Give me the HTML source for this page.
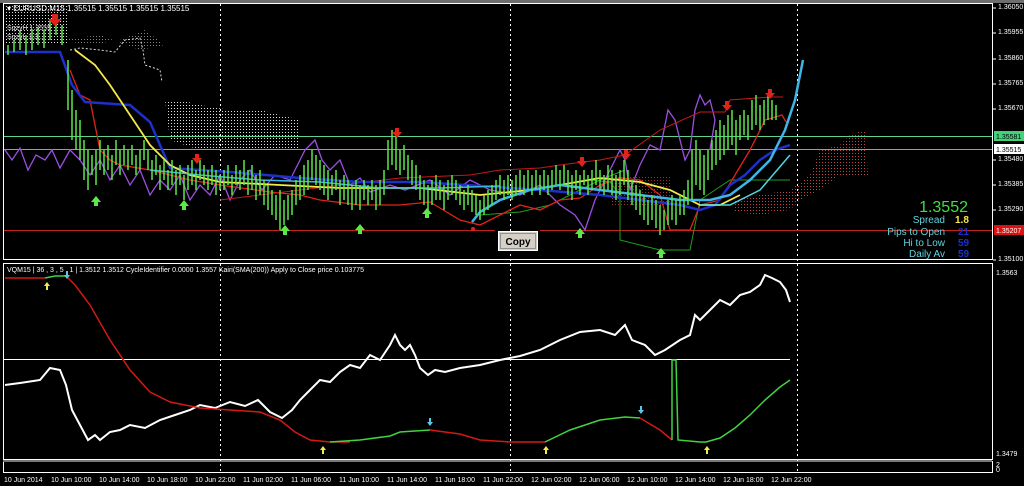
<!DOCTYPE html>
<html><head><meta charset="utf-8"><style>
html,body{margin:0;padding:0;background:#000;width:1024px;height:486px;overflow:hidden}
svg{display:block}
text{font-family:"Liberation Sans",sans-serif}
</style></head><body>
<svg width="1024" height="486" viewBox="0 0 1024 486" xmlns="http://www.w3.org/2000/svg">
<defs>
<pattern id="wd" width="3" height="3" patternUnits="userSpaceOnUse"><rect width="1" height="1" fill="#ddd"/></pattern>
<pattern id="rd" width="3" height="3" patternUnits="userSpaceOnUse"><rect width="1" height="1" fill="#b44"/></pattern>
</defs>
<rect x="0" y="0" width="1024" height="3" fill="#6e6e6e"/>
<!-- panes -->
<rect x="3.5" y="3.5" width="989" height="256" fill="none" stroke="#fff"/>
<rect x="3.5" y="263.5" width="989" height="196" fill="none" stroke="#fff"/>
<rect x="3.5" y="461.5" width="989" height="11" fill="none" stroke="#fff"/>
<rect x="3" y="460" width="989" height="2" fill="#777"/>
<!-- dotted verticals -->
<g stroke="#fff" stroke-dasharray="2,3">
<line x1="220.5" y1="4" x2="220.5" y2="474"/><line x1="510.5" y1="4" x2="510.5" y2="474"/><line x1="797.5" y1="4" x2="797.5" y2="474"/>
</g>
<!-- clouds -->
<rect x="5" y="5" width="62" height="40" fill="url(#wd)"/>
<polygon points="165,100 180,100 200,105 230,110 260,110 300,120 300,150 240,150 200,150 170,140" fill="url(#wd)"/>
<polygon points="60,40 100,35 140,50 165,45 145,30 120,40 90,45" fill="url(#wd)" opacity=".6"/>
<path d="M70,50 L80,48 100,50 115,52 125,40 140,38 143,50 145,65 160,70 162,82" fill="none" stroke="#ddd" stroke-dasharray="2,2"/>
<polygon points="735,200 760,195 790,190 810,175 820,150 840,145 850,135 865,130 868,175 840,175 820,190 800,200 790,210 760,215 735,212" fill="url(#rd)"/>
<rect x="610" y="175" width="60" height="30" fill="url(#rd)" opacity=".8"/>
<!-- horizontal lines -->
<line x1="4" y1="136.5" x2="992" y2="136.5" stroke="#5fd38d"/>
<line x1="4" y1="149.5" x2="992" y2="149.5" stroke="#9a9a9a"/>
<line x1="4" y1="230.5" x2="495" y2="230.5" stroke="#c0221d"/>
<line x1="540" y1="230.5" x2="992" y2="230.5" stroke="#c0221d"/>
<line x1="4" y1="359.5" x2="790" y2="359.5" stroke="#fff"/>
<!-- green stepped line -->
<polyline points="590,180 610,182 620,195 620,240 660,250 690,250 700,200 715,190 730,180 790,180" fill="none" stroke="#1f9e1f" stroke-width="1"/>
<polyline points="480,215 520,212 550,205 600,180 625,170" fill="none" stroke="#1f9e1f"/>
<!-- purple -->
<polyline points="5,150 12,160 20,148 28,170 36,155 45,160 52,150 60,168 70,150 80,160 90,175 100,160 110,180 120,165 130,185 140,170 150,195 160,180 170,190 180,175 190,200 200,185 210,195 220,175 230,200 240,180 250,170 262,190 275,175 290,180 305,150 315,140 322,160 330,170 340,160 350,185 360,178 370,192 390,185 405,190 430,180 450,195 470,180 490,190 520,195 540,185 560,205 575,215 585,230 595,200 610,170 620,150 625,160 630,190 640,165 650,145 660,150 668,110 675,120 685,160 690,150 695,110 700,95 705,105 710,100 715,120 710,150" fill="none" stroke="#9b4fe0" stroke-width="1.3"/>
<!-- red lines -->
<polyline points="70,70 80,95 90,100 100,150 110,160 120,165 150,170 190,180 220,185 270,192 300,195 320,200 360,205 400,205 430,202 460,220 480,225 500,215 520,205 540,210 560,200 580,198 600,185 620,178 640,180 660,195 670,230 690,230 700,205 720,200 735,175 750,150 765,120 782,115 786,122" fill="none" stroke="#e0231a" stroke-width="1.3"/>
<polyline points="220,200 300,190 400,178 470,175 500,170 540,168 560,165 600,160 625,155 660,130 700,112 725,112 730,100 770,97 783,97" fill="none" stroke="#c21b17"/>
<!-- blue -->
<polyline points="5,52 60,52 72,85 85,102 130,105 150,122 170,168 230,172 300,178 360,182 420,182 480,186 540,190 600,195 640,200 680,205 700,210 715,205 730,185 745,175 760,160 775,150 790,145" fill="none" stroke="#1d30c8" stroke-width="2.5"/>
<!-- yellow -->
<polyline points="75,50 95,65 110,85 130,115 150,145 170,165 190,175 220,182 280,185 340,188 420,188 480,195 530,190 560,185 600,178 640,182 670,190 700,205 720,205 740,195" fill="none" stroke="#f3ea4a" stroke-width="1.8"/>
<!-- cyan -->
<polyline points="472,222 480,212 500,200 530,190 560,185 600,190 640,195 680,200 710,200 730,195 750,180 770,160 785,130 795,100 803,60" fill="none" stroke="#3fb6e6" stroke-width="2.5"/>
<polyline points="150,170 200,175 260,180 320,182 380,188 440,188 500,186" fill="none" stroke="#3fb6e6" stroke-width="1.5"/>
<polyline points="700,205 730,205 760,190 790,155" fill="none" stroke="#4fd6df" stroke-width="1.5"/>
<!-- green candles -->
<g stroke="#5de84a" stroke-width="1.5">
<path d="M8,45V55 M14,40V52 M20,30V50 M26,35V55 M32,30V50 M38,28V45 M44,30V48 M50,20V40 M56,15V35 M62,25V45 M68,60V110 M72,90V140 M76,110V150 M80,120V160 M84,140V180 M88,150V190 M92,155V175 M96,150V185 M100,140V170 M104,150V175 M108,145V170 M112,155V180 M116,140V165 M120,150V175 M124,145V165 M128,150V170 M132,145V165 M136,155V175 M140,150V170 M144,140V160 M148,150V170 M152,160V180 M156,155V175 M160,165V190 M164,160V180 M168,170V190 M172,160V185 M176,170V195 M180,165V185 M184,175V200 M188,165V190 M192,160V185 M196,170V190 M200,160V180 M204,165V185 M208,170V190 M212,165V185 M216,170V195 M220,175V190 M224,170V190 M228,165V185 M232,175V195 M236,165V185 M240,170V190 M244,160V185 M248,170V195 M252,165V190 M256,175V200 M260,170V195 M264,180V205 M268,185V210 M272,190V215 M276,195V220 M280,190V230 M284,200V225 M288,195V220 M292,190V215 M296,180V205 M300,175V200 M304,165V195 M308,160V190 M312,150V180 M316,155V185 M320,160V190 M324,165V195 M328,170V200 M332,175V195 M336,170V190 M340,180V205 M344,175V200 M348,180V205 M352,185V210 M356,180V205 M360,185V210 M364,180V200 M368,185V205 M372,180V200 M376,185V210 M380,180V205 M384,170V195 M388,140V170 M392,130V165 M396,135V170 M400,150V175 M404,145V170 M408,155V180 M412,160V185 M416,165V190 M420,175V200 M424,180V205 M428,185V210 M432,180V205 M436,175V200 M440,180V200 M444,185V210 M448,180V200 M452,175V195 M456,180V200 M460,185V205 M464,190V210 M468,185V205 M472,190V212 M476,195V215 M480,200V220 M484,195V215 M488,190V210 M492,185V205 M496,180V200 M500,175V195 M504,180V200 M508,175V195 M512,180V200 M516,175V195 M520,170V190 M524,175V195 M528,170V190 M532,175V195 M536,170V190 M540,175V195 M544,170V190 M548,175V195 M552,170V190 M556,165V185 M560,170V190 M564,165V185 M568,170V195 M572,175V200 M576,170V190 M580,175V195 M584,170V185 M588,175V195 M592,170V190 M596,160V185 M600,170V190 M604,175V195 M608,165V190 M612,170V195 M616,175V200 M620,170V195 M624,160V185 M628,170V200 M632,180V205 M636,185V210 M640,190V215 M644,195V220 M648,200V225 M652,195V220 M656,200V228 M660,205V235 M664,210V230 M668,200V225 M672,195V220 M676,200V225 M680,195V215 M684,190V215 M688,180V205 M692,150V200 M696,140V185 M700,150V190 M704,155V195 M708,150V180 M712,140V170 M716,130V165 M720,120V160 M724,125V155 M728,115V150 M732,110V145 M736,120V155 M740,115V140 M744,110V135 M748,115V140 M752,100V130 M756,95V125 M760,105V130 M764,100V125 M768,95V120 M772,100V120 M776,105V120"/>
</g>
<!-- arrows -->
<g fill="#e0231a"><path d="M52,14h6v5h4l-7,7l-7-7h4z"/><path d="M195,154h4v4h3l-5,6l-5-6h3z"/><path d="M395,128h4v4h3l-5,6l-5-6h3z"/><path d="M580,157h4v4h3l-5,6l-5-6h3z"/><path d="M624,150h4v4h3l-5,6l-5-6h3z"/><path d="M725,101h4v4h3l-5,6l-5-6h3z"/><path d="M768,89h4v4h3l-5,6l-5-6h3z"/><circle cx="473" cy="229" r="2"/></g>
<g fill="#5de84a"><path d="M94,206h4v-4h3l-5,-6l-5,6h3z"/><path d="M182,210h4v-4h3l-5,-6l-5,6h3z"/><path d="M283,235h4v-4h3l-5,-6l-5,6h3z"/><path d="M358,234h4v-4h3l-5,-6l-5,6h3z"/><path d="M425,218h4v-4h3l-5,-6l-5,6h3z"/><path d="M578,238h4v-4h3l-5,-6l-5,6h3z"/><path d="M659,258h4v-4h3l-5,-6l-5,6h3z"/></g>
<!-- header text -->
<text x="7" y="11" font-size="8" fill="#fff">▾ EURUSD,M15  1.35515 1.35515 1.35515 1.35515</text>
<text x="7" y="30" font-size="7" fill="#ddd">SqzyH 1.3555</text>
<text x="7" y="39" font-size="7" fill="#ddd">SqzyL 1.3...</text>
<!-- info block -->
<text x="968" y="212" font-size="16" fill="#3fe03f" text-anchor="end">1.3552</text>
<text x="945" y="223" font-size="10" fill="#5fd6e0" text-anchor="end">Spread</text><text x="955" y="223" font-size="10" fill="#f3ea4a" font-weight="bold">1.8</text>
<text x="945" y="235" font-size="10" fill="#5fd6e0" text-anchor="end">Pips to Open</text><text x="958" y="235" font-size="10" fill="#1d30c8" font-weight="bold">21</text>
<text x="945" y="246" font-size="10" fill="#5fd6e0" text-anchor="end">Hi to Low</text><text x="958" y="246" font-size="10" fill="#1d30c8" font-weight="bold">59</text>
<text x="945" y="257" font-size="10" fill="#5fd6e0" text-anchor="end">Daily Av</text><text x="958" y="257" font-size="10" fill="#1d30c8" font-weight="bold">59</text>
<!-- Copy button -->
<rect x="498.5" y="231.5" width="39" height="19" fill="#d4d0c8" stroke="#fff"/>
<rect x="500.5" y="233.5" width="35" height="15" fill="none" stroke="#555" stroke-dasharray="1,1"/>
<text x="518" y="245" font-size="10" font-weight="bold" fill="#000" text-anchor="middle">Copy</text>
<!-- right axis -->
<g font-size="7" fill="#fff">
<text x="998" y="9">1.36050</text><text x="998" y="34">1.35955</text><text x="998" y="60">1.35860</text><text x="998" y="85">1.35765</text><text x="998" y="110">1.35670</text><text x="998" y="161">1.35480</text><text x="998" y="186">1.35385</text><text x="998" y="211">1.35290</text><text x="998" y="261">1.35100</text>
<text x="996" y="275">1.3563</text><text x="996" y="456">1.3479</text><text x="996" y="467">2</text><text x="996" y="472">0</text>
</g>
<g stroke="#fff"><line x1="993" y1="8" x2="996" y2="8"/><line x1="993" y1="33" x2="996" y2="33"/><line x1="993" y1="59" x2="996" y2="59"/><line x1="993" y1="84" x2="996" y2="84"/><line x1="993" y1="109" x2="996" y2="109"/><line x1="993" y1="160" x2="996" y2="160"/><line x1="993" y1="185" x2="996" y2="185"/><line x1="993" y1="210" x2="996" y2="210"/><line x1="993" y1="260" x2="996" y2="260"/></g>
<rect x="994" y="131" width="30" height="10" fill="#3fd37a"/><text x="996" y="139" font-size="7" fill="#000">1.35581</text>
<rect x="994" y="144" width="30" height="10" fill="#fff"/><text x="996" y="152" font-size="7" fill="#000">1.35515</text>
<rect x="994" y="225" width="30" height="10" fill="#d11"/><text x="996" y="233" font-size="7" fill="#fff">1.35207</text>
<!-- sub-window -->
<text x="7" y="272" font-size="7" fill="#fff">VQM15 |  36 , 3 , 5 , 1  |  1.3512 1.3512  CycleIdentifier 0.0000 1.3557  Kairi(SMA(200)) Apply to Close price 0.103775</text>
<polyline points="5,385 20,383 40,380 50,368 60,370 66,385 72,410 80,425 88,440 95,435 100,440 110,432 120,430 130,425 145,428 160,420 175,415 190,410 200,405 215,408 230,402 245,406 258,400 270,412 282,418 292,410 300,400 310,390 320,380 330,382 340,372 350,365 360,368 370,355 380,360 390,345 395,335 400,345 405,350 410,345 415,355 420,368 428,375 435,370 445,372 460,368 480,365 500,360 520,356 540,350 560,340 580,332 600,330 615,335 625,325 632,340 645,345 655,355 665,350 680,340 690,335 695,315 700,320 710,310 720,300 730,305 740,295 750,292 760,285 765,275 772,278 780,282 786,290 790,302" fill="none" stroke="#fff" stroke-width="2"/>
<polyline points="5,278 45,278" fill="none" stroke="#d21a15" stroke-width="1.5"/>
<polyline points="45,278 55,276 66,276" fill="none" stroke="#3fd43f" stroke-width="1.5"/>
<polyline points="66,276 75,285 90,305 110,340 130,370 150,392 170,402 200,408 230,410 260,412 280,420 295,432 310,440 330,442 350,442" fill="none" stroke="#d21a15" stroke-width="1.5"/>
<polyline points="330,442 360,440 390,436 400,432 430,430" fill="none" stroke="#3fd43f" stroke-width="1.5"/>
<polyline points="430,430 460,434 480,440 510,442 545,442" fill="none" stroke="#d21a15" stroke-width="1.5"/>
<polyline points="545,442 570,430 600,420 625,417 640,418" fill="none" stroke="#3fd43f" stroke-width="1.5"/>
<polyline points="640,418 660,430 672,440" fill="none" stroke="#d21a15" stroke-width="1.5"/>
<polyline points="672,440 672,360 676,360 678,440 700,442 706,442 720,438 735,428 750,415 765,400 780,387 790,380" fill="none" stroke="#3fd43f" stroke-width="1.5"/>
<g fill="#f3ea4a"><path d="M47,282l-3,4h2v4h2v-4h2z"/><path d="M323,446l-3,4h2v4h2v-4h2z"/><path d="M546,446l-3,4h2v4h2v-4h2z"/><path d="M707,446l-3,4h2v4h2v-4h2z"/></g>
<g fill="#5fc6e6"><path d="M67,279l-3,-4h2v-4h2v4h2z"/><path d="M430,426l-3,-4h2v-4h2v4h2z"/><path d="M641,414l-3,-4h2v-4h2v4h2z"/></g>
<!-- time axis -->
<g font-size="7" fill="#fff">
<text x="4" y="482">10 Jun 2014</text><text x="51" y="482">10 Jun 10:00</text><text x="99" y="482">10 Jun 14:00</text><text x="147" y="482">10 Jun 18:00</text><text x="195" y="482">10 Jun 22:00</text><text x="243" y="482">11 Jun 02:00</text><text x="291" y="482">11 Jun 06:00</text><text x="339" y="482">11 Jun 10:00</text><text x="387" y="482">11 Jun 14:00</text><text x="435" y="482">11 Jun 18:00</text><text x="483" y="482">11 Jun 22:00</text><text x="531" y="482">12 Jun 02:00</text><text x="579" y="482">12 Jun 06:00</text><text x="627" y="482">12 Jun 10:00</text><text x="675" y="482">12 Jun 14:00</text><text x="723" y="482">12 Jun 18:00</text><text x="771" y="482">12 Jun 22:00</text>
</g>
</svg>
</body></html>
